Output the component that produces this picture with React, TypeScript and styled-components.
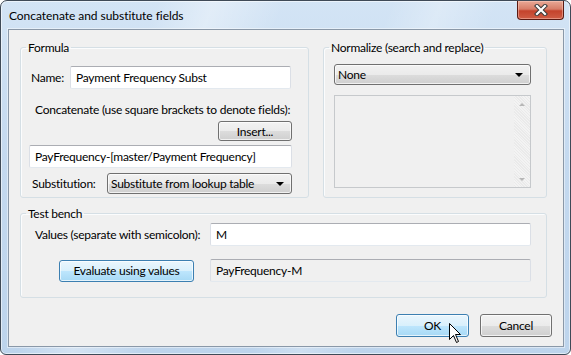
import styled, { createGlobalStyle, css } from "styled-components";

const GlobalStyle = createGlobalStyle`
  body {
    margin: 0;
    background: #ffffff;
    font-family: Lato, "Liberation Sans", sans-serif;
    font-size: 12px;
    letter-spacing: -0.25px;
    color: #000;
  }
`;

const Window = styled.div`
  position: relative;
  box-sizing: border-box;
  width: 571px;
  height: 355px;
  display: flex;
  flex-direction: column;
  padding: 0 6px 7px 7px;
  border: 1px solid #3f4a57;
  border-radius: 7px 7px 6px 6px;
  background:
    linear-gradient(112deg, rgba(255, 255, 255, 0) 22%, rgba(255, 255, 255, 0.35) 30%, rgba(255, 255, 255, 0) 40%),
    linear-gradient(112deg, rgba(255, 255, 255, 0) 55%, rgba(255, 255, 255, 0.25) 62%, rgba(255, 255, 255, 0) 70%),
    linear-gradient(180deg, #d3e4f5 0%, #c4d9ef 45%, #bdd4ec 100%);
  box-shadow: inset 0 0 0 1px rgba(255, 255, 255, 0.55);
`;

const TitleBar = styled.div`
  height: 28px;
  display: flex;
  align-items: flex-start;
  flex-shrink: 0;
`;

const Title = styled.span`
  margin: 7px 0 0 1px;
  line-height: 16px;
  font-size: 12px;
  letter-spacing: -0.05px;
  color: #000;
`;

const CloseButton = styled.div`
  margin-left: auto;
  width: 47px;
  height: 19px;
  box-sizing: border-box;
  display: flex;
  align-items: center;
  justify-content: center;
  border: 1px solid #5a1a12;
  border-top: none;
  border-radius: 0 0 4px 4px;
  background: linear-gradient(180deg, #e9a996 0%, #d77d68 45%, #c4432c 55%, #cf5d45 100%);
  box-shadow: inset 0 0 0 1px rgba(255, 210, 200, 0.45);
`;

const Client = styled.div`
  flex: 1;
  display: flex;
  flex-direction: column;
  padding: 10px 0 8px 11px;
  background: #f0f0f0;
  border: 1px solid #8a98a8;
  box-shadow: 0 0 0 1px rgba(255, 255, 255, 0.45);
`;

const TopRow = styled.div`
  display: flex;
  align-items: stretch;
`;

const GroupBox = styled.fieldset<{ $width: number; $pad: string }>`
  box-sizing: border-box;
  width: ${(p) => p.$width}px;
  margin: 0;
  padding: ${(p) => p.$pad};
  border: 1px solid #d5dfe5;
  border-radius: 3px;
  box-shadow: inset 1px 1px 0 #fbfcfd;
  display: flex;
  flex-direction: column;
  min-inline-size: 0;
`;

const Legend = styled.legend<{ $shift: number }>`
  margin-left: ${(p) => p.$shift}px;
  padding: 0 2px;
  line-height: 15px;
  font-size: 12px;
`;

const Row = styled.div<{ $mt?: number; $end?: boolean }>`
  display: flex;
  align-items: center;
  justify-content: ${(p) => (p.$end ? "flex-end" : "flex-start")};
  margin-top: ${(p) => p.$mt ?? 0}px;
`;

const Label = styled.span<{ $width?: number; $ml?: number }>`
  ${(p) => p.$width && css`width: ${p.$width}px;`}
  margin-left: ${(p) => p.$ml ?? 0}px;
  line-height: 15px;
  white-space: nowrap;
  flex-shrink: 0;
`;

const TextBox = styled.div<{ $width: number; $readOnly?: boolean; $ml?: number }>`
  box-sizing: border-box;
  width: ${(p) => p.$width}px;
  height: 23px;
  margin-left: ${(p) => p.$ml ?? 0}px;
  padding: 0 5px;
  display: flex;
  align-items: center;
  background: ${(p) => (p.$readOnly ? "#f0f0f0" : "#ffffff")};
  border: 1px solid #dbdfe6;
  border-top-color: #abadb3;
  border-bottom-color: #e3e9ef;
  border-radius: 2px;
  white-space: nowrap;
  overflow: hidden;
`;

const Button = styled.div<{ $width: number; $height: number; $active?: boolean; $ml?: number }>`
  box-sizing: border-box;
  width: ${(p) => p.$width}px;
  height: ${(p) => p.$height}px;
  margin-left: ${(p) => p.$ml ?? 0}px;
  display: flex;
  align-items: center;
  justify-content: center;
  border: 1px solid ${(p) => (p.$active ? "#3c7fb1" : "#707070")};
  border-radius: 3px;
  background: ${(p) =>
    p.$active
      ? "linear-gradient(180deg, #eaf6fd 0%, #d9f0fc 50%, #bee6fd 50%, #a7d9f5 100%)"
      : "linear-gradient(180deg, #f2f2f2 0%, #ebebeb 50%, #dddddd 50%, #cfcfcf 100%)"};
  box-shadow: inset 0 0 0 1px rgba(255, 255, 255, 0.7);
  white-space: nowrap;
  flex-shrink: 0;
`;

const ComboBox = styled.div<{ $width: number }>`
  box-sizing: border-box;
  width: ${(p) => p.$width}px;
  height: 21px;
  padding: 0 7px 0 3px;
  display: flex;
  align-items: center;
  justify-content: space-between;
  border: 1px solid #707070;
  border-radius: 3px;
  background: linear-gradient(180deg, #f2f2f2 0%, #ebebeb 50%, #dddddd 50%, #cfcfcf 100%);
  box-shadow: inset 0 0 0 1px rgba(255, 255, 255, 0.7);
  white-space: nowrap;
`;

const Arrow = styled.span`
  width: 0;
  height: 0;
  border-left: 4px solid transparent;
  border-right: 4px solid transparent;
  border-top: 4px solid #000;
  margin-top: 1px;
`;

const ListBox = styled.div`
  box-sizing: border-box;
  height: 93px;
  margin-top: 10px;
  display: flex;
  justify-content: flex-end;
  border: 1px solid #c6c9cc;
  background: #f0f0f0;
`;

const ScrollBar = styled.div`
  width: 16px;
  display: flex;
  flex-direction: column;
  justify-content: space-between;
  align-items: center;
  padding: 7px 0 6px;
  background: repeating-linear-gradient(45deg, #f3f3f3 0 1px, #eaeaea 1px 2px);
`;

const ScrollArrow = styled.span<{ $down?: boolean }>`
  width: 0;
  height: 0;
  border-left: 3px solid transparent;
  border-right: 3px solid transparent;
  ${(p) =>
    p.$down
      ? css`border-top: 3px solid #b7b7b7;`
      : css`border-bottom: 3px solid #b7b7b7;`}
`;

const Footer = styled.div`
  display: flex;
  justify-content: flex-end;
  gap: 11px;
  margin-top: 16px;
  padding-right: 11px;
`;

const Cursor = styled.svg`
  position: absolute;
  left: 448px;
  top: 322px;
`;

export default function App() {
  return (
    <>
      <GlobalStyle />
      <Window>
        <TitleBar>
          <Title>Concatenate and substitute fields</Title>
          <CloseButton>
            <svg width="14" height="12" viewBox="0 0 14 12">
              <path d="M3 2 L11 10 M11 2 L3 10" stroke="#3a3a3a" strokeWidth="4.2" strokeLinecap="square" />
              <path d="M3 2 L11 10 M11 2 L3 10" stroke="#ffffff" strokeWidth="2.2" strokeLinecap="square" />
            </svg>
          </CloseButton>
        </TitleBar>
        <Client>
          <TopRow>
            <GroupBox $width={289} $pad="11px 16px 3px 10px">
              <Legend $shift={-5}>Formula</Legend>
              <Row>
                <Label $width={39}>Name:</Label>
                <TextBox $width={221}>Payment Frequency Subst</TextBox>
              </Row>
              <Row $mt={13}>
                <Label $ml={4}>Concatenate (use square brackets to denote fields):</Label>
              </Row>
              <Row $mt={4} $end>
                <Button $width={74} $height={20}>Insert...</Button>
              </Row>
              <Row $mt={4}>
                <TextBox $width={263} $ml={-2}>PayFrequency-[master/Payment Frequency]</TextBox>
              </Row>
              <Row $mt={5}>
                <Label $width={75} $ml={1}>Substitution:</Label>
                <ComboBox $width={185}>
                  Substitute from lookup table
                  <Arrow />
                </ComboBox>
              </Row>
            </GroupBox>
            <GroupBox $width={224} $pad="9px 15px 9px 10px" style={{ marginLeft: 14 }}>
              <Legend $shift={-5}>Normalize (search and replace)</Legend>
              <ComboBox $width={197}>
                None
                <Arrow />
              </ComboBox>
              <ListBox>
                <ScrollBar>
                  <ScrollArrow />
                  <ScrollArrow $down />
                </ScrollBar>
              </ListBox>
            </GroupBox>
          </TopRow>
          <GroupBox $width={527} $pad="2px 15px 15px 14px" style={{ marginTop: 8 }}>
            <Legend $shift={-9}>Test bench</Legend>
            <Row>
              <Label $width={175}>Values (separate with semicolon):</Label>
              <TextBox $width={321}>M</TextBox>
            </Row>
            <Row $mt={13}>
              <Button $width={135} $height={22} $active $ml={24}>
                Evaluate using values
              </Button>
              <TextBox $width={321} $readOnly $ml={16}>PayFrequency-M</TextBox>
            </Row>
          </GroupBox>
          <Footer>
            <Button $width={73} $height={23} $active>OK</Button>
            <Button $width={72} $height={23}>Cancel</Button>
          </Footer>
        </Client>
        <Cursor width="13" height="21" viewBox="0 0 13 21">
          <path
            d="M0.5 0.5 L0.5 16.5 L4.5 12.5 L7.5 19.5 L9.5 18.5 L6.5 11.5 L11.5 11.5 Z"
            fill="#ffffff"
            stroke="#000000"
            strokeWidth="1"
            strokeLinejoin="miter"
          />
        </Cursor>
      </Window>
    </>
  );
}
